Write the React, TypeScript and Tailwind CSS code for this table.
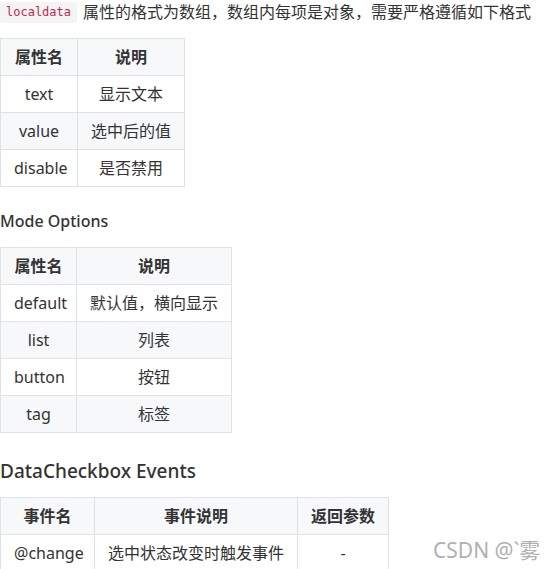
import React from "react";

const font = { fontFamily: '"Noto Sans", "Noto Sans CJK SC", sans-serif' };

type Row = string[];

function Table({ widths, head, rows, total }: { widths: number[]; head: string[]; rows: Row[]; total: number }) {
  return (
    <table className="border-collapse table-fixed text-[16px] text-[#333]" style={{ width: total }}>
      <colgroup>
        {widths.map((w, i) => (
          <col key={i} style={{ width: w }} />
        ))}
      </colgroup>
      <thead>
        <tr className="bg-[#f6f8fa] h-[37px]">
          {head.map((h, i) => (
            <th key={i} className="border border-[#dfe2e5] px-[13px] py-0 font-bold text-center whitespace-nowrap">
              {h}
            </th>
          ))}
        </tr>
      </thead>
      <tbody>
        {rows.map((r, ri) => (
          <tr key={ri} className={`h-[37px] ${ri % 2 === 1 ? "bg-[#f6f8fa]" : "bg-white"}`}>
            {r.map((c, ci) => (
              <td key={ci} className="border border-[#dfe2e5] px-[13px] py-0 text-center whitespace-nowrap">
                {c}
              </td>
            ))}
          </tr>
        ))}
      </tbody>
    </table>
  );
}

export default function App() {
  return (
    <div className="relative w-[552px] h-[569px] overflow-hidden bg-white text-[#333]" style={font}>
      <div className="flex items-center h-[23px] pt-[1px] text-[16px] leading-[22px]">
        <code
          className="inline-flex items-center h-[21px] px-[6px] rounded-[3px] bg-[#f3f4f4] text-[#c7254e] text-[12px]"
          style={{ fontFamily: '"DejaVu Sans Mono", "Liberation Mono", monospace' }}
        >
          localdata
        </code>
        <span className="ml-[6px] whitespace-nowrap">属性的格式为数组，数组内每项是对象，需要严格遵循如下格式</span>
      </div>
      <div className="mt-[15px]">
        <Table
          total={184}
          widths={[77, 107]}
          head={["属性名", "说明"]}
          rows={[
            ["text", "显示文本"],
            ["value", "选中后的值"],
            ["disable", "是否禁用"],
          ]}
        />
      </div>
      <h4 className="mt-[23px] h-[22px] text-[16px] font-medium leading-[22px]">Mode Options</h4>
      <div className="mt-[15px]">
        <Table
          total={231}
          widths={[76, 155]}
          head={["属性名", "说明"]}
          rows={[
            ["default", "默认值，横向显示"],
            ["list", "列表"],
            ["button", "按钮"],
            ["tag", "标签"],
          ]}
        />
      </div>
      <h3 className="mt-[24px] h-[28px] text-[19px] font-medium leading-[28px]">DataCheckbox Events</h3>
      <div className="mt-[12px]">
        <Table
          total={388}
          widths={[94, 203, 91]}
          head={["事件名", "事件说明", "返回参数"]}
          rows={[["@change", "选中状态改变时触发事件", "-"]]}
        />
      </div>
      <div className="absolute left-[433px] top-[538px] text-[21px] leading-[24px] text-[#b0b0b0] whitespace-nowrap">
        CSDN @`雾
      </div>
    </div>
  );
}
